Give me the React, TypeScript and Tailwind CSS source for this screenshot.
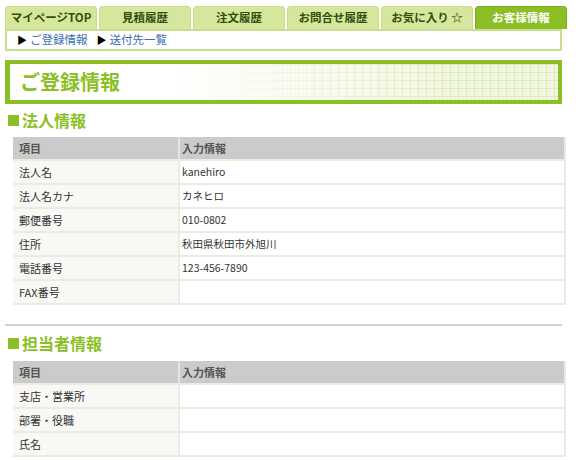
import React from 'react';

const tabs = ['マイページTOP', '見積履歴', '注文履歴', 'お問合せ履歴', 'お気に入り ☆', 'お客様情報'];

const corpRows: [string, string][] = [
  ['法人名', 'kanehiro'],
  ['法人名カナ', 'カネヒロ'],
  ['郵便番号', '010-0802'],
  ['住所', '秋田県秋田市外旭川'],
  ['電話番号', '123-456-7890'],
  ['FAX番号', ''],
];

const staffRows: [string, string][] = [
  ['支店・営業所', ''],
  ['部署・役職', ''],
  ['氏名', ''],
];

const SectionTitle = ({ text }: { text: string }) => (
  <h3 className="flex items-center gap-[3px] pl-[3px] text-[16px] font-bold leading-none text-[#8cbf26]">
    <span className="inline-block h-[11px] w-[11px] bg-[#8cbf26]"></span>
    {text}
  </h3>
);

const InfoTable = ({ rows }: { rows: [string, string][] }) => (
  <div className="ml-[8px] w-[553px] border-r-2 border-b-2 border-[#ebebe4] text-[11px] text-[#333]">
    <div className="flex h-[22px] items-center bg-[#cbcbcb] font-bold text-[#555]">
      <div className="flex h-full w-[167px] items-center border-r-2 border-[#e6e6e0] pl-[6px]">項目</div>
      <div className="pl-[2px]">入力情報</div>
    </div>
    {rows.map(([label, value], i) => (
      <div key={label} className={i === 0 ? 'flex h-[24px] border-t-2 border-[#ebebe4]' : 'flex h-[24px] border-t-2 border-[#ebebe4]'}>
        <div className="flex w-[167px] items-center border-r-2 border-[#ebebe4] bg-[#f8f8f4] pl-[6px]">{label}</div>
        <div className="flex flex-1 items-center bg-white pl-[2px] text-[10.5px]">{value}</div>
      </div>
    ))}
  </div>
);

export default function App() {
  return (
    <div className="h-[460px] w-[580px] overflow-hidden bg-white font-['Noto_Sans_CJK_JP','Noto_Sans',sans-serif]">
      <div className="w-[567px] px-[5px] pt-[6px]">
        {/* tabs */}
        <div className="flex w-[562px] gap-[2px]">
          {tabs.map((t, i) => {
            const active = i === tabs.length - 1;
            return (
              <div
                key={t}
                className={
                  active
                    ? 'flex h-[23px] flex-1 items-center justify-center rounded-t-[4px] border border-b-0 border-[#7aab1c] bg-[#8cbf26] text-[11.5px] font-bold text-white'
                    : 'flex h-[23px] flex-1 items-center justify-center rounded-t-[4px] border border-b-0 border-[#c9dc8e] bg-[#d7e69d] text-[11.5px] font-bold text-[#2f4f0c]'
                }
              >
                {t}
              </div>
            );
          })}
        </div>

        {/* sub nav */}
        <div className="flex h-[22px] items-center gap-[9px] border-2 border-[#c6df8e] pl-[10px] text-[11.5px] text-[#3a6db5]">
          <span><span className="mr-[3px] text-[10px] text-black">▶</span>ご登録情報</span>
          <span><span className="mr-[3px] text-[10px] text-black">▶</span>送付先一覧</span>
        </div>

        {/* page title */}
        <div className="mt-[6px] border-t border-[#eeeeee] pt-[2px]">
          <div className="flex h-[44px] items-center border-[4px] border-l-[5px] border-[#8cbf26] bg-[linear-gradient(to_right,#ffffff_30%,rgba(255,255,255,0)_80%),repeating-linear-gradient(to_right,#dfeabb_0_1px,transparent_1px_8px),repeating-linear-gradient(to_bottom,#dfeabb_0_1px,transparent_1px_8px),linear-gradient(#f2f7e2,#f2f7e2)] pl-[10px]">
            <h2 className="text-[20px] font-bold leading-none text-[#8cbf26]">ご登録情報</h2>
          </div>
        </div>

        {/* corporate */}
        <div className="mt-[8px] flex flex-col gap-[9px]">
          <SectionTitle text="法人情報" />
          <InfoTable rows={corpRows} />
        </div>

        <div className="mt-[19px] h-[2px] bg-[#d4d4d4]"></div>

        {/* staff */}
        <div className="mt-[9px] flex flex-col gap-[10px]">
          <SectionTitle text="担当者情報" />
          <InfoTable rows={staffRows} />
        </div>
      </div>
    </div>
  );
}
